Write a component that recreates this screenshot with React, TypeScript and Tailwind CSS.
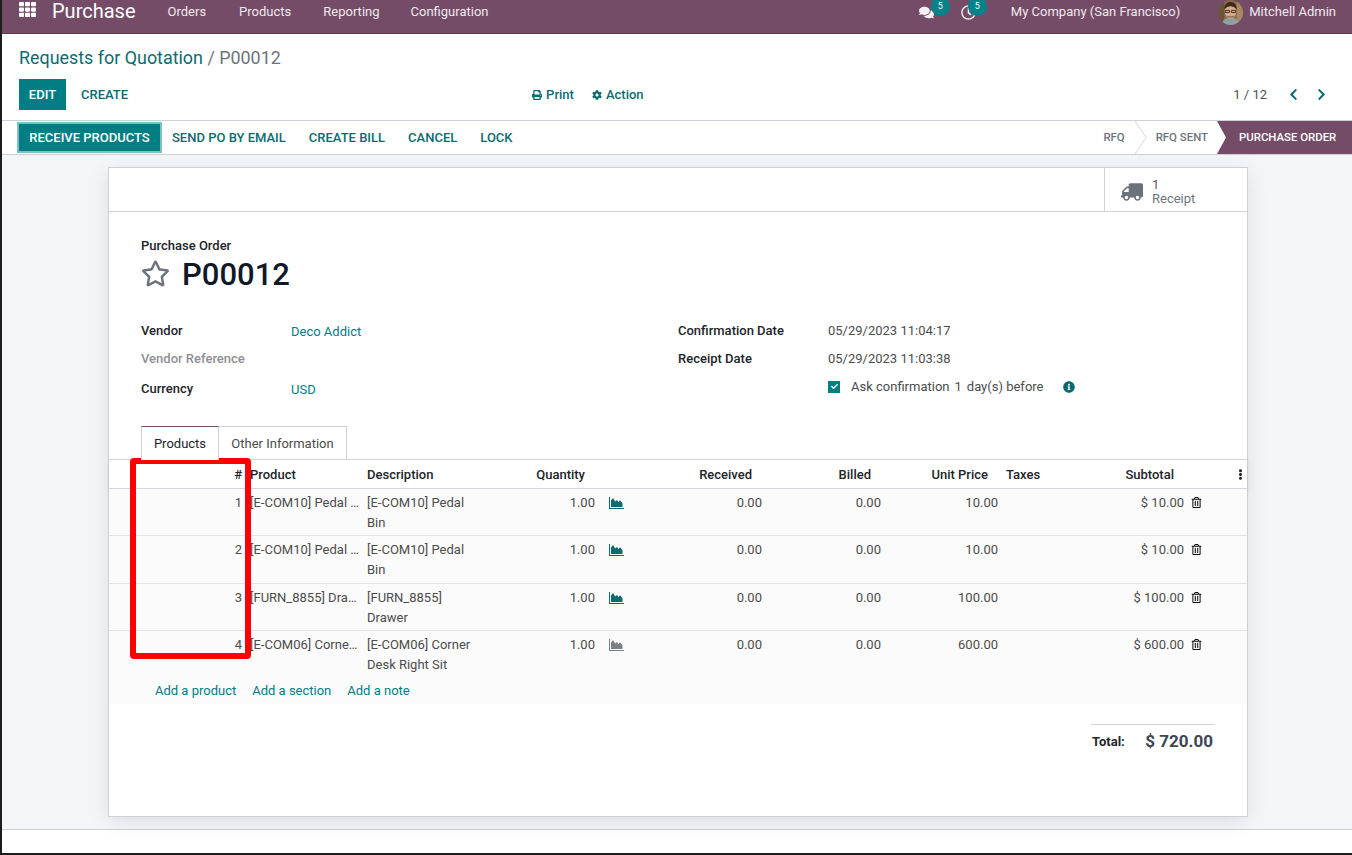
import React from 'react';
import {
  FaChevronLeft,
  FaChevronRight,
  FaCheck,
  FaCog,
  FaComments,
  FaEllipsisV,
  FaInfoCircle,
  FaPrint,
  FaRegClock,
  FaRegStar,
  FaRegTrashAlt,
  FaTh,
  FaTruck,
} from 'react-icons/fa';

const COLS =
  'grid grid-cols-[137px_117px_118px_118px_49px_118px_119px_117px_51px_135px_59px]';

type Line = {
  n: number;
  product: string;
  desc: [string, string];
  price: string;
  subtotal: string;
  height: string;
  muted?: boolean;
};

const LINES: Line[] = [
  { n: 1, product: '[E-COM10] Pedal Bin', desc: ['[E-COM10] Pedal', 'Bin'], price: '10.00', subtotal: '$ 10.00', height: 'h-[46px]' },
  { n: 2, product: '[E-COM10] Pedal Bin', desc: ['[E-COM10] Pedal', 'Bin'], price: '10.00', subtotal: '$ 10.00', height: 'h-[48px]' },
  { n: 3, product: '[FURN_8855] Drawer', desc: ['[FURN_8855]', 'Drawer'], price: '100.00', subtotal: '$ 100.00', height: 'h-[47px]' },
  { n: 4, product: '[E-COM06] Corner Desk Right Sit', desc: ['[E-COM06] Corner', 'Desk Right Sit'], price: '600.00', subtotal: '$ 600.00', height: 'h-[47px]', muted: true },
];

function Avatar() {
  return (
    <svg width="25" height="25" viewBox="0 0 24 24" className="rounded-full">
      <rect width="24" height="24" fill="#8a6a4a" />
      <rect x="0" y="0" width="6" height="24" fill="#6d5440" />
      <rect x="18" y="0" width="6" height="24" fill="#a78a64" />
      <path d="M4 24c0-5 3-7 8-7s8 2 8 7z" fill="#8fa0a0" />
      <ellipse cx="12" cy="11" rx="5.500" ry="7" fill="#d9a98a" />
      <path d="M6 9c0-5 3-7 6-7s6 2 6 7c-2-2-4-3-6-3s-4 1-6 3z" fill="#3a2a20" />
      <path d="M7 10h4v2H7zM13 10h4v2h-4z" fill="none" stroke="#2a1f18" strokeWidth=".8" />
      <path d="M9 15.500c2 1.200 4 1.200 6 0" stroke="#7a4a3a" strokeWidth="1" fill="none" />
    </svg>
  );
}

// forecast button: thin axes with a jagged filled area
function AreaChart({ className }: { className: string }) {
  return (
    <svg width="15" height="12" viewBox="0 0 15 12" className={className} fill="currentColor">
      <path d="M0 0h1v11h14v1H0z" />
      <path d="M2 10V3.500L4 1l2.200 3.500L7.800 3l1.700 2L11 3.300l2.500 3V10z" />
    </svg>
  );
}

function Badge({ icon, offset }: { icon: React.ReactNode; offset: string }) {
  return (
    <div className="relative flex h-[16px] w-[16px] items-center text-[#f4f0f3]">
      {icon}
      <span className={`absolute top-[-7px] flex h-[19px] w-[19px] items-center justify-center rounded-full bg-[#00838a] text-[9px] text-white ${offset}`}>
        5
      </span>
    </div>
  );
}

function NavBar() {
  return (
    <div className="flex h-[34px] shrink-0 items-start border-b border-[#5b3c52] bg-[#744c67] text-[13px] text-[#f0e9ee]">
      <FaTh className="ml-[17px] mt-[1px] text-[17px] text-white" />
      <span className="ml-[16px] mt-[-3px] text-[20px] leading-[28px] text-white">Purchase</span>
      <span className="ml-[32px] mt-[2px] leading-[20px]">Orders</span>
      <span className="ml-[33px] mt-[2px] leading-[20px]">Products</span>
      <span className="ml-[32px] mt-[2px] leading-[20px]">Reporting</span>
      <span className="ml-[31px] mt-[2px] leading-[20px]">Configuration</span>
      <div className="ml-auto mt-[4px] flex gap-[26px]">
        <Badge offset="left-[12px]" icon={<FaComments className="text-[15px]" />} />
        <Badge offset="left-[7px]" icon={<FaRegClock className="text-[15px]" />} />
      </div>
      <span className="ml-[34px] mt-[2px] leading-[20px]">My Company (San Francisco)</span>
      <div className="ml-[38px] flex h-[24px] items-start">
        <Avatar />
      </div>
      <span className="ml-[6px] mr-[16px] mt-[2px] leading-[20px]">Mitchell Admin</span>
    </div>
  );
}

function ControlPanel() {
  return (
    <div className="h-[87px] shrink-0 border-b border-[#ced0d8] bg-white pl-[17px] pr-[24px]">
      <div className="pt-[10px] text-[17.9px] leading-[27px]">
        <span className="text-[#0b6b70]">Requests for Quotation</span>
        <span className="text-[#6c757d]"> / P00012</span>
      </div>
      <div className="mt-[8px] flex h-[31px] items-center text-[13px]">
        <button className="flex h-[31px] w-[47px] items-center justify-center bg-[#017e84] font-medium text-white">
          EDIT
        </button>
        <button className="ml-[15px] font-medium text-[#0b6b70]">CREATE</button>
        <div className="ml-[404px] flex items-center gap-[4px] font-medium text-[#0b6b70]">
          <FaPrint className="text-[10px]" />
          <span>Print</span>
          <FaCog className="ml-[14px] text-[10px]" />
          <span>Action</span>
        </div>
        <span className="ml-auto text-[#495057]">1 / 12</span>
        <FaChevronLeft className="ml-[20px] text-[13px] text-[#0b6b70]" />
        <FaChevronRight className="ml-[15px] text-[13px] text-[#0b6b70]" />
      </div>
    </div>
  );
}

function StatusBar() {
  return (
    <div className="flex h-[34px] shrink-0 items-center border-b border-[#ced0d8] bg-white pl-[17px] text-[13px] font-medium text-[#0b6b70]">
      <button className="flex h-[27px] w-[141px] items-center justify-center bg-[#017e84] text-white outline-2 outline-[#7fbec1]">
        RECEIVE PRODUCTS
      </button>
      <span className="ml-[12px]">SEND PO BY EMAIL</span>
      <span className="ml-[23px]">CREATE BILL</span>
      <span className="ml-[23px]">CANCEL</span>
      <span className="ml-[23px]">LOCK</span>
      <div className="ml-auto flex h-full items-stretch text-[11.4px] text-[#6c757d]">
        <span className="flex items-center">RFQ</span>
        <svg width="14" height="33" viewBox="0 0 14 33" className="ml-[9px]">
          <path d="M1 0l11 16.500L1 33" fill="none" stroke="#d5d7dd" />
        </svg>
        <span className="ml-[8px] flex items-center">RFQ SENT</span>
        <div className="ml-[9px] flex w-[135px] items-center bg-[#744c67] pl-[22px] text-white [clip-path:polygon(0_0,100%_0,100%_100%,0_100%,9px_50%)]">
          PURCHASE ORDER
        </div>
      </div>
    </div>
  );
}

function Field({
  label,
  value,
  muted,
  link,
  height = 'h-[28px]',
}: {
  label: string;
  value?: string;
  muted?: boolean;
  link?: boolean;
  height?: string;
}) {
  return (
    <div className={`flex items-center text-[13px] ${height}`}>
      <span className={`w-[150px] font-medium ${muted ? 'text-[#8f8f95]' : 'text-[#212529]'}`}>{label}</span>
      <span className={link ? 'mt-[2px] text-[#017e84]' : 'text-[#4c4c4c]'}>{value}</span>
    </div>
  );
}

function OrderLines() {
  const head = 'flex items-center justify-end pr-[14px]';
  return (
    <div className="text-[13px] leading-[19.5px]">
      <div className={`${COLS} h-[30px] border-y border-[#d5d7dd] bg-white pt-[1px] font-medium text-[#212529] shadow-[0_2px_6px_rgba(0,0,0,0.08)]`}>
        <div className="flex items-center justify-end pr-[4px]">#</div>
        <div className="flex items-center pl-[4px]">Product</div>
        <div className="flex items-center pl-[4px]">Description</div>
        <div className={head}>Quantity</div>
        <div />
        <div className={head}>Received</div>
        <div className={head}>Billed</div>
        <div className={head}>Unit Price</div>
        <div className="flex items-center pl-[4px]">Taxes</div>
        <div className={head}>Subtotal</div>
        <div className="flex items-center justify-end pr-[1px]">
          <FaEllipsisV className="text-[11px]" />
        </div>
      </div>
      {LINES.map((l, i) => (
        <div
          key={l.n}
          className={`${COLS} ${l.height} bg-[#fbfbfb] pt-[4px] text-[#4c4c4c] ${i > 0 ? 'border-t border-[#e2e2e4]' : ''}`}
        >
          <div className="pr-[4px] text-right">{l.n}</div>
          <div className="truncate pl-[4px] pr-[4px]">{l.product}</div>
          <div className="pl-[4px]">
            {l.desc[0]}
            <br />
            {l.desc[1]}
          </div>
          <div className="pr-[4px] text-right">1.00</div>
          <div className="pl-[10px] pt-[4px]">
            <AreaChart className={l.muted ? 'text-[#7c7f86]' : 'text-[#0b6b70]'} />
          </div>
          <div className="pr-[4px] text-right">0.00</div>
          <div className="pr-[4px] text-right">0.00</div>
          <div className="pr-[4px] text-right">{l.price}</div>
          <div />
          <div className="pr-[4px] text-right">{l.subtotal}</div>
          <div className="pl-[3px] pt-[4px]">
            <FaRegTrashAlt className="text-[11px] text-[#111111]" />
          </div>
        </div>
      ))}
      <div className="flex h-[27px] items-center gap-[16px] bg-[#fbfbfb] pl-[46px] text-[#017e84]">
        <span>Add a product</span>
        <span>Add a section</span>
        <span>Add a note</span>
      </div>
    </div>
  );
}

function Sheet() {
  return (
    <div className="h-[650px] w-[1140px] border border-[#ced0d8] bg-white shadow-[0_5px_20px_-1px_rgba(0,0,0,0.1)]">
      <div className="flex h-[44px] justify-end border-b border-[#ced0d8]">
        <div className="flex w-[143px] items-center gap-[9px] border-l border-[#ced0d8] pl-[16px] pt-[4px] text-[13px] leading-[14px]">
          <FaTruck className="-scale-x-100 text-[22px] text-[#6c727c]" />
          <div>
            <div className="text-[#744c67]">1</div>
            <div className="text-[#6c757d]">Receipt</div>
          </div>
        </div>
      </div>
      <div className="px-[32px] pt-[24px]">
        <div className="text-[13px] font-medium leading-[20px] text-[#212529]">Purchase Order</div>
        <div className="flex h-[38px] items-center">
          <FaRegStar className="mb-[4px] text-[29px] text-[#6c727c]" />
          <span className="ml-[12px] text-[31px] font-medium text-[#111827]">P00012</span>
        </div>
        <div className="mt-[23px] flex">
          <div className="w-[537px]">
            <Field label="Vendor" value="Deco Addict" link />
            <Field label="Vendor Reference" muted />
            <Field label="Currency" value="USD" link height="h-[32px]" />
          </div>
          <div className="text-[#4c4c4c]">
            <Field label="Confirmation Date" value="05/29/2023 11:04:17" />
            <Field label="Receipt Date" value="05/29/2023 11:03:38" />
            <div className="ml-[150px] flex h-[27px] items-center text-[13px]">
              <span className="flex h-[12px] w-[12px] items-center justify-center bg-[#017e84]">
                <FaCheck className="text-[7px] text-white" />
              </span>
              <span className="ml-[11px]">Ask confirmation</span>
              <span className="ml-[5px]">1</span>
              <span className="ml-[5px]">day(s) before</span>
              <FaInfoCircle className="ml-[19px] text-[12px] text-[#0b6b70]" />
            </div>
          </div>
        </div>
      </div>
      <div className="mt-[21px] flex h-[33px] pl-[32px] text-[13px]">
        <div className="z-10 flex h-[34px] w-[78px] items-center justify-center border-x border-t border-x-[#ced0d8] border-t-[#744c67] bg-white text-[#212529]">
          Products
        </div>
        <div className="flex w-[128px] items-center justify-center border-r border-t border-[#ced0d8] pt-[1px] text-[#4c4c4c]">
          Other Information
        </div>
      </div>
      <OrderLines />
      <div className="ml-auto mr-[32px] mt-[20px] w-[124px] border-t border-[#ced0d8] pl-[1px] pt-[4px]">
        <div className="flex items-center justify-between pr-[2px]">
          <span className="text-[13px] font-bold text-[#212529]">Total:</span>
          <span className="text-[17px] font-bold text-[#3d4653]">$ 720.00</span>
        </div>
      </div>
    </div>
  );
}

export default function App() {
  return (
    <div className="relative flex h-[855px] w-[1352px] flex-col overflow-hidden border-b-2 border-l-2 border-[#1c1c1c] bg-white font-['Roboto',sans-serif]">
      <NavBar />
      <ControlPanel />
      <StatusBar />
      <div className="h-[675px] shrink-0 border-b border-[#ced0d8] bg-[#f4f5f9] pl-[106px] pt-[12px]">
        <Sheet />
      </div>
      {/* red annotation drawn over the # column */}
      <div className="absolute left-[128px] top-[458px] h-[201px] w-[121px] rounded-[4px] border-[6px] border-[#ff0000]" />
    </div>
  );
}
